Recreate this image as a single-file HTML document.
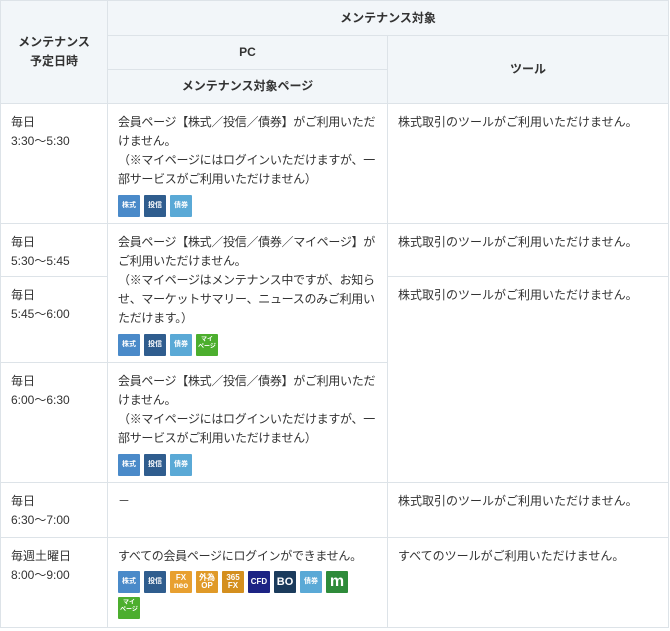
<!DOCTYPE html><html><head><meta charset="utf-8"><style>
body{margin:0;width:670px;height:631px;background:#fff;font-family:"Liberation Sans","Noto Sans CJK JP",sans-serif;font-size:12px;color:#333;position:relative;overflow:hidden}
.c{position:absolute;box-sizing:border-box;border:1px solid #dde3e8;}
.h{background:#f2f6f9;font-weight:bold;display:flex;align-items:center;justify-content:center;text-align:center;line-height:19px}
.t{padding:9px 10px;line-height:19px}
.p{letter-spacing:-0.3px;padding-right:6px}
.b{display:inline-block;width:22px;height:22px;margin-right:4px;color:#fff;font-size:7px;font-weight:bold;text-align:center;line-height:22px;vertical-align:top;border-radius:1px;letter-spacing:0}
.b2{line-height:8px;padding-top:3px;box-sizing:border-box;font-size:8px}
.b3{line-height:7px;padding-top:3px;box-sizing:border-box;font-size:6px}
.k{background:#4a8ac9}.s{background:#2f5d8e}.y{background:#5aa9d6}.m{background:#4cae2e}
.bd{margin-top:6px}
</style></head><body>
<div class="c h" style="left:0;top:0;width:108px;height:104px">メンテナンス<br>予定日時</div>
<div class="c h" style="left:107px;top:0;width:562px;height:36px">メンテナンス対象</div>
<div class="c h" style="left:107px;top:35px;width:281px;height:35px">PC</div>
<div class="c h" style="left:107px;top:69px;width:281px;height:35px">メンテナンス対象ページ</div>
<div class="c h" style="left:387px;top:35px;width:282px;height:69px">ツール</div>

<div class="c t" style="left:0;top:103px;width:108px;height:121px">毎日<br>3:30〜5:30</div>
<div class="c t p" style="left:107px;top:103px;width:281px;height:121px">会員ページ【株式／投信／債券】がご利用いただけません。<br>（※マイページにはログインいただけますが、一部サービスがご利用いただけません）<div class="bd"><span class="b k">株式</span><span class="b s">投信</span><span class="b y">債券</span></div></div>
<div class="c t" style="left:387px;top:103px;width:282px;height:121px">株式取引のツールがご利用いただけません。</div>

<div class="c t" style="left:0;top:223px;width:108px;height:54px">毎日<br>5:30〜5:45</div>
<div class="c t" style="left:0;top:276px;width:108px;height:87px">毎日<br>5:45〜6:00</div>
<div class="c t p" style="left:107px;top:223px;width:281px;height:140px">会員ページ【株式／投信／債券／マイページ】がご利用いただけません。<br>（※マイページはメンテナンス中ですが、お知らせ、マーケットサマリー、ニュースのみご利用いただけます。）<div class="bd"><span class="b k">株式</span><span class="b s">投信</span><span class="b y">債券</span><span class="b m b3">マイ<br>ページ</span></div></div>
<div class="c t" style="left:387px;top:223px;width:282px;height:54px">株式取引のツールがご利用いただけません。</div>
<div class="c t" style="left:387px;top:276px;width:282px;height:207px">株式取引のツールがご利用いただけません。</div>

<div class="c t" style="left:0;top:362px;width:108px;height:121px">毎日<br>6:00〜6:30</div>
<div class="c t p" style="left:107px;top:362px;width:281px;height:121px">会員ページ【株式／投信／債券】がご利用いただけません。<br>（※マイページにはログインいただけますが、一部サービスがご利用いただけません）<div class="bd"><span class="b k">株式</span><span class="b s">投信</span><span class="b y">債券</span></div></div>

<div class="c t" style="left:0;top:482px;width:108px;height:56px">毎日<br>6:30〜7:00</div>
<div class="c t" style="left:107px;top:482px;width:281px;height:56px">－</div>
<div class="c t" style="left:387px;top:482px;width:282px;height:56px">株式取引のツールがご利用いただけません。</div>

<div class="c t" style="left:0;top:537px;width:108px;height:91px">毎週土曜日<br>8:00〜9:00</div>
<div class="c t p" style="left:107px;top:537px;width:281px;height:91px">すべての会員ページにログインができません。<div style="margin-top:5px;line-height:0"><span class="b k">株式</span><span class="b s">投信</span><span class="b b2" style="background:#e8a030">FX<br>neo</span><span class="b b2" style="background:#e09a28">外為<br>OP</span><span class="b b2" style="background:#d48f1e">365<br>FX</span><span class="b" style="background:#1c2384;font-size:8px">CFD</span><span class="b" style="background:#1b3b5c;font-size:11px">BO</span><span class="b y">債券</span><span class="b" style="background:#2e8b3a;font-size:16px">m</span><div style="height:4px"></div><span class="b m b3">マイ<br>ページ</span></div></div>
<div class="c t" style="left:387px;top:537px;width:282px;height:91px">すべてのツールがご利用いただけません。</div>
</body></html>
